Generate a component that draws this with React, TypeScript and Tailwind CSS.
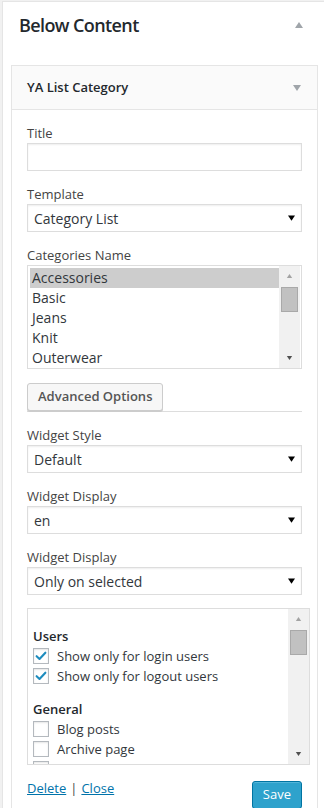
import React from "react"

function Tri({ up, className }: { up?: boolean; className: string }) {
  return (
    <svg viewBox="0 0 8 6" className={className} fill="currentColor">
      <path d={up ? "M4 0L8 6H0Z" : "M0 0H8L4 6Z"} />
    </svg>
  )
}

function Label({ children }: { children: React.ReactNode }) {
  return <div className="text-[13px] leading-[19px] text-[#444]">{children}</div>
}

function Select({ value }: { value: string }) {
  return (
    <div className="flex h-[28px] w-[275px] items-center justify-between border border-[#ddd] bg-white px-[6px] text-[14px] text-[#32373c] shadow-[inset_0_1px_2px_rgba(0,0,0,0.07)]">
      <span>{value}</span>
      <Tri className="h-[6px] w-[7px] text-black" />
    </div>
  )
}

function ScrollBar() {
  return (
    <div className="flex w-[21px] flex-col items-center bg-[#f1f1f1]">
      <div className="flex h-[20px] items-center">
        <Tri up className="h-[4px] w-[7px] text-[#a3a3a3]" />
      </div>
      <div className="mt-[1px] h-[25px] w-[17px] border border-[#a9a9a9] bg-[#c1c1c1]" />
      <div className="flex-1" />
      <div className="flex h-[20px] items-center">
        <Tri className="h-[4px] w-[7px] text-[#505050]" />
      </div>
    </div>
  )
}

function Check({ checked, label }: { checked?: boolean; label: string }) {
  return (
    <div className="flex h-[20px] items-center gap-[8px]">
      <div className="flex h-[16px] w-[16px] items-center justify-center border border-[#b4b9be] bg-white shadow-[inset_0_1px_2px_rgba(0,0,0,0.1)]">
        {checked && (
          <svg viewBox="0 0 16 16" className="h-[14px] w-[14px]">
            <path d="M3 8.2L6.3 11.4L13 4.2" fill="none" stroke="#1e8cbe" strokeWidth="2.4" strokeLinecap="round" strokeLinejoin="round" />
          </svg>
        )}
      </div>
      <span>{label}</span>
    </div>
  )
}

const categories = ["Accessories", "Basic", "Jeans", "Knit", "Outerwear"]

export default function App() {
  return (
    <div className="h-[808px] overflow-hidden bg-[#f1f1f1] pl-[2px] pt-[1px] font-['Open_Sans',sans-serif]">
      <div className="h-[807px] border-l border-t border-[#e5e5e5] bg-white">
        <div className="flex h-[63px] items-start justify-between pl-[16px] pr-[21px] pt-[11px]">
          <h3 className="text-[18px] font-semibold leading-[24px] tracking-[-0.6px] text-[#23282d]">Below Content</h3>
          <div className="flex h-[24px] items-center">
            <Tri up className="h-[6px] w-[8px] text-[#a0a5aa]" />
          </div>
        </div>

        <div className="ml-[8px] w-[307px] border border-b-0 border-[#e5e5e5]">
          <div className="flex h-[44px] items-center justify-between border-b border-[#e5e5e5] bg-[#fafafa] pl-[15px] pr-[16px]">
            <span className="text-[13px] font-semibold text-[#23282d]">YA List Category</span>
            <Tri className="h-[6px] w-[8px] text-[#a0a5aa]" />
          </div>

          <div className="px-[15px] pt-[14px]">
            <Label>Title</Label>
            <div className="h-[28px] w-[275px] border border-[#ddd] bg-white shadow-[inset_0_1px_2px_rgba(0,0,0,0.07)]" />

            <div className="mt-[14px]">
              <Label>Template</Label>
              <Select value="Category List" />
            </div>

            <div className="mt-[14px]">
              <Label>Categories Name</Label>
              <div className="flex h-[104px] w-[275px] border border-[#ddd] bg-white">
                <div className="ml-[2px] w-[249px] pt-[2px] text-[14px] text-[#32373c]">
                  {categories.map((c, i) => (
                    <div key={c} className={`h-[20px] pl-[2px] leading-[20px] ${i === 0 ? "bg-[#cdcdcd]" : ""}`}>
                      {c}
                    </div>
                  ))}
                </div>
                <ScrollBar />
              </div>
            </div>

            <div className="mt-[14px] flex w-[275px] items-end border-b border-[#ddd]">
              <button className="h-[28px] rounded-[3px] border border-[#ccc] bg-[#f7f7f7] px-[10px] text-[13px] font-semibold text-[#555] shadow-[0_1px_0_#ccc]">
                Advanced Options
              </button>
            </div>

            <div className="mt-[14px]">
              <Label>Widget Style</Label>
              <Select value="Default" />
            </div>

            <div className="mt-[14px]">
              <Label>Widget Display</Label>
              <Select value="en" />
            </div>

            <div className="mt-[14px]">
              <Label>Widget Display</Label>
              <Select value="Only on selected" />
            </div>

            <div className="mt-[13px] flex h-[157px] w-[283px] overflow-hidden border border-[#ddd] bg-white">
              <div className="flex-1 overflow-hidden pl-[5px] pt-[17px] text-[13px] leading-[20px] text-[#32373c]">
                <div className="font-semibold text-[#23282d]">Users</div>
                <Check checked label="Show only for login users" />
                <Check checked label="Show only for logout users" />
                <div className="mt-[13px] font-semibold text-[#23282d]">General</div>
                <Check label="Blog posts" />
                <Check label="Archive page" />
                <Check label="Search results" />
              </div>
              <ScrollBar />
            </div>

            <div className="mt-[14px] flex w-[275px] items-start justify-between">
              <div className="text-[13px] leading-[18px] text-[#444]">
                <a href="#" className="text-[#0073aa] underline">Delete</a>
                <span className="mx-[4px]">|</span>
                <a href="#" className="text-[#0073aa] underline">Close</a>
              </div>
              <button className="mt-[2px] h-[28px] rounded-[3px] border border-[#0074a2] bg-[#2ea2cc] px-[10px] text-[13px] text-white shadow-[inset_0_1px_0_rgba(120,200,230,0.5)]">
                Save
              </button>
            </div>
          </div>
        </div>
      </div>
    </div>
  )
}
